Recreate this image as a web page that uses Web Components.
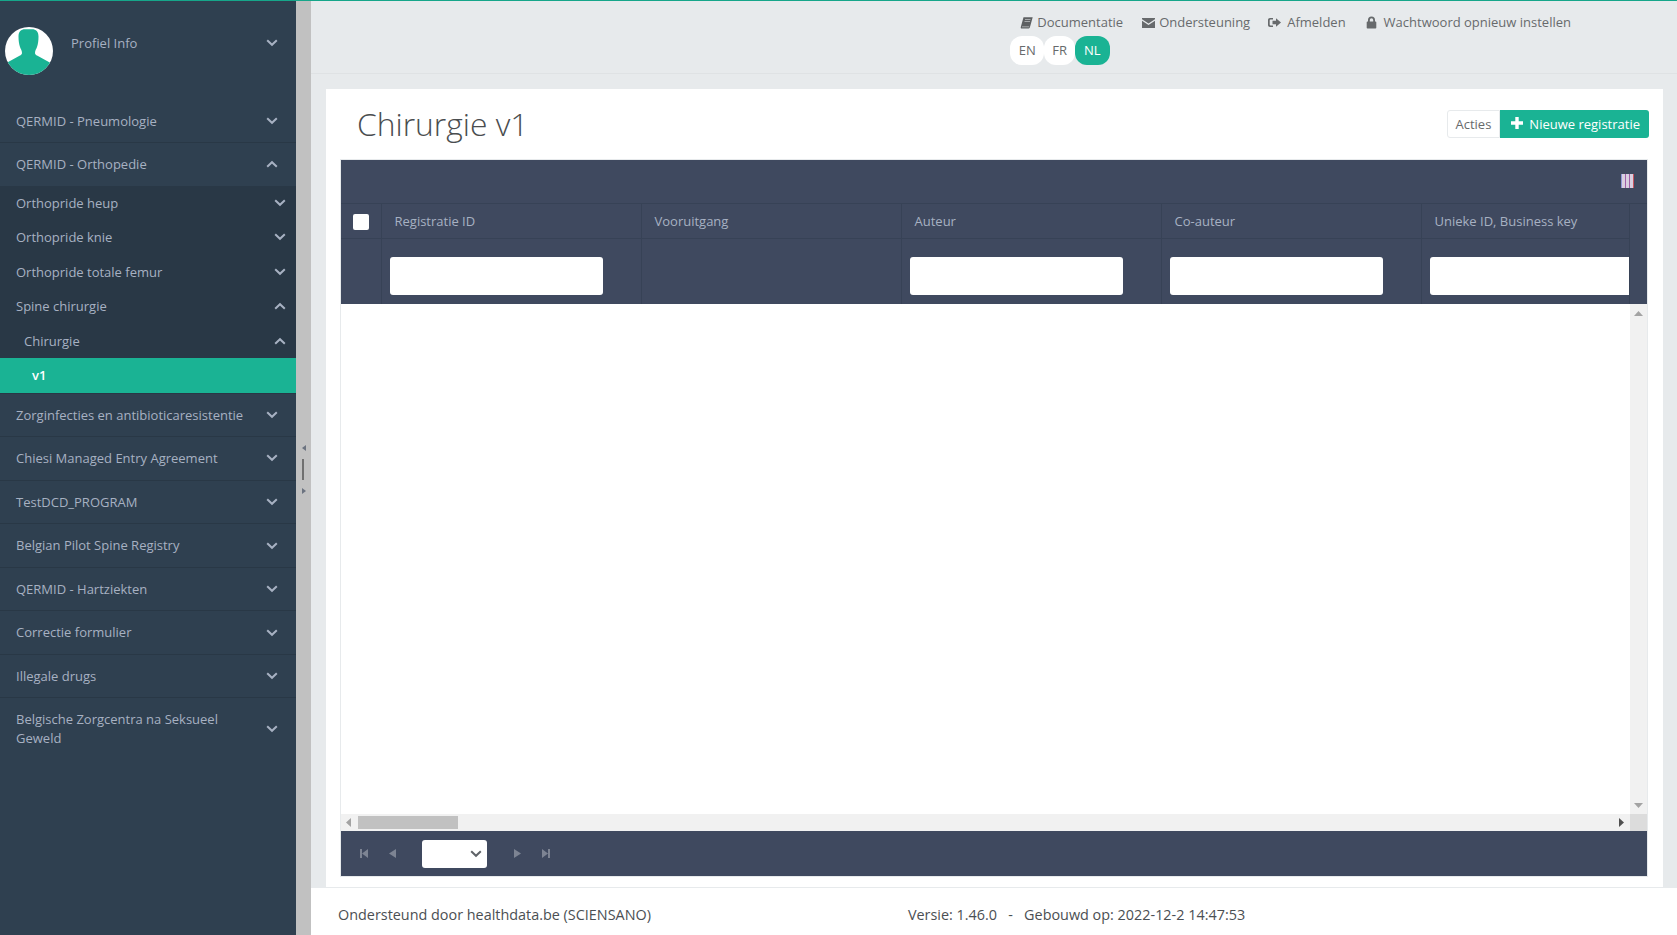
<!DOCTYPE html>
<html>
<head>
<meta charset="utf-8">
<title>Chirurgie v1</title>
<style>
    html, body { margin: 0; height: 100%; }
    body { font-family: "Open Sans", "Liberation Sans", sans-serif; font-size: 13px; line-height: 1.42857; color: #676a6c; overflow: hidden; }
</style>
</head>
<body>
<hd-app>
    <hd-sidebar slot="sidebar">
        <hd-nav-item label="QERMID - Pneumologie"></hd-nav-item>
        <hd-nav-item label="QERMID - Orthopedie" open>
            <hd-sub-item label="Orthopride heup"></hd-sub-item>
            <hd-sub-item label="Orthopride knie"></hd-sub-item>
            <hd-sub-item label="Orthopride totale femur"></hd-sub-item>
            <hd-sub-item label="Spine chirurgie" open></hd-sub-item>
            <hd-sub-item label="Chirurgie" level="1" open></hd-sub-item>
            <hd-sub-item label="v1" level="2" active></hd-sub-item>
        </hd-nav-item>
        <hd-nav-item label="Zorginfecties en antibioticaresistentie"></hd-nav-item>
        <hd-nav-item label="Chiesi Managed Entry Agreement"></hd-nav-item>
        <hd-nav-item label="TestDCD_PROGRAM"></hd-nav-item>
        <hd-nav-item label="Belgian Pilot Spine Registry"></hd-nav-item>
        <hd-nav-item label="QERMID - Hartziekten"></hd-nav-item>
        <hd-nav-item label="Correctie formulier"></hd-nav-item>
        <hd-nav-item label="Illegale drugs"></hd-nav-item>
        <hd-nav-item label="Belgische Zorgcentra na Seksueel Geweld"></hd-nav-item>
    </hd-sidebar>
    <hd-topbar slot="topbar"></hd-topbar>
    <hd-panel slot="content" heading="Chirurgie v1">
        <hd-grid></hd-grid>
    </hd-panel>
    <hd-footer slot="footer"></hd-footer>
</hd-app>

<script>
// small helper, every element just writes its own shadow root
function shadow(el, html) {
    el.attachShadow({ mode: 'open' }).innerHTML = html;
}

const chevron = (open, color) => `
    <svg width="12" height="8" viewBox="0 0 12 8" fill="none" stroke="${color || '#a7b1c2'}" stroke-width="2">
        <path d="${open ? 'M1.2 6.8 6 2.2l4.8 4.6' : 'M1.2 1.2 6 5.8l4.8-4.6'}"/>
    </svg>`;

class HdApp extends HTMLElement {
    constructor() {
        super();
        shadow(this, `
            <style>
                :host { display: grid; grid-template-columns: 296px 15px 1fr; grid-template-rows: 1fr; height: 100vh; box-sizing: border-box; border-top: 1px solid #16a68a; background: #e7eaec; }
                .splitter { background: #c1c1c1; display: flex; flex-direction: column; align-items: center; justify-content: center; gap: 8px; padding-top: 2px; }
                .splitter i { display: block; width: 2px; height: 21px; background: #707070; margin: 0 0 0 -1px; }
                main { display: flex; flex-direction: column; min-width: 0; }
            </style>
            <slot name="sidebar"></slot>
            <div class="splitter">
                <svg width="6" height="6" viewBox="0 0 6 6"><path d="M5 0v6L1 3z" fill="#6b7380"/></svg>
                <i></i>
                <svg width="6" height="6" viewBox="0 0 6 6"><path d="M1 0v6l4-3z" fill="#6b7380"/></svg>
            </div>
            <main>
                <slot name="topbar"></slot>
                <slot name="content"></slot>
                <slot name="footer"></slot>
            </main>`);
    }
}

class HdSidebar extends HTMLElement {
    constructor() {
        super();
        shadow(this, `
            <style>
                :host { display: block; background: #2f4050; color: #a7b1c2; overflow: hidden; }
                .profile { height: 98.6px; box-sizing: border-box; padding: 26px 16px 0 5px; display: flex; align-items: flex-start; }
                .avatar { width: 48px; height: 48px; flex: none; }
                .name { flex: 1; margin: 0 0 0 18px; height: 32px; line-height: 32px; }
                .caret { margin-top: 12px; padding-right: 2px; display: flex; }
            </style>
            <div class="profile">
                <svg class="avatar" viewBox="0 0 48 48">
                    <defs><clipPath id="c"><circle cx="24" cy="24" r="24"/></clipPath></defs>
                    <g clip-path="url(#c)">
                        <rect width="48" height="48" fill="#fff"/>
                        <path d="M13.500 9.500C13.500 4.500 16 2.300 20 2.300h7c4 0 6.500 2.200 6.500 7.200 0 4-.5 7.500-1.500 10.500-.7 2-2 3.500-2 6 0 1.200.8 2 2.500 2.700L47 36.700V48H0V36.700l14.500-8c1.700-.7 2.500-1.500 2.500-2.700 0-2.500-1.300-4-2-6-1-3-1.500-6.500-1.500-10.500z" fill="#1ab394"/>
                    </g>
                </svg>
                <span class="name">Profiel Info</span>
                <span class="caret">${chevron(false)}</span>
            </div>
            <slot></slot>`);
    }
}

class HdNavItem extends HTMLElement {
    constructor() {
        super();
        const open = this.hasAttribute('open');
        shadow(this, `
            <style>
                :host { display: block; border-bottom: 1px solid #293846; }
                :host(:last-child) { border-bottom: 0; }
                a { display: flex; align-items: center; padding: 12px 18px 12px 16px; }
                span { flex: 1; padding-right: 14px; }
                a svg { flex: none; }
                .sub { background: #293846; }
            </style>
            <a><span>${this.getAttribute('label')}</span>${chevron(open)}</a>
            ${open ? '<div class="sub"><slot></slot></div>' : ''}`);
    }
}

class HdSubItem extends HTMLElement {
    constructor() {
        super();
        const level = +(this.getAttribute('level') || 0);
        const active = this.hasAttribute('active');
        shadow(this, `
            <style>
                :host { display: flex; height: 34.47px; box-sizing: border-box; padding: 8px 10px 8px ${16 + level * 8}px; align-items: center; justify-content: space-between; }
                :host([active]) { background: #1ab394; color: #fff; font-weight: 600; }
            </style>
            <span>${this.getAttribute('label')}</span>
            ${active ? '' : chevron(this.hasAttribute('open'))}`);
    }
}

const topIcons = {
    book: '<path d="M1.800 12 4.500 2.200h9.200L11 12c-.3 1-1 1.600-2 1.600H3c-1 0-1.500-.7-1.200-1.600z" fill="#5d6062"/><path d="M3 11.800h7.200M6 4.500h5.500M5.500 6.500h5.500" stroke="#b9bcbe" stroke-width=".8" fill="none"/>',
    mail: '<path d="M1 3h13v1.200L7.500 8.400 1 4.200zM1 5.800l6.500 4.100L14 5.800V13H1z" fill="#676a6c"/>',
    out: '<path d="M6 3H3C1.800 3 1 3.800 1 5v5c0 1.200.8 2 2 2h3v-1.600H3.500c-.5 0-.8-.3-.8-.8V5.400c0-.5.3-.8.8-.8H6zM9 3.200l5 4.300-5 4.300V9.300H5.500V5.700H9z" fill="#676a6c"/>',
    lock: '<path d="M4 6.500V5a3.500 3.500 0 0 1 7 0v1.500h.5c.5 0 .8.300.8.8v5.400c0 .5-.3.800-.8.800h-8c-.5 0-.8-.3-.8-.8V7.300c0-.5.3-.8.8-.8zm1.800 0h3.400V5a1.700 1.700 0 0 0-3.400 0z" fill="#676a6c"/>'
};

class HdTopbar extends HTMLElement {
    constructor() {
        super();
        const link = (icon, text, gap, extra) => `<a style="--gap:${gap}px;${extra || ''}"><svg width="15" height="15" viewBox="0 0 15 15">${topIcons[icon]}</svg>${text}</a>`;
        shadow(this, `
            <style>
                :host { display: flex; justify-content: flex-end; height: 73px; box-sizing: border-box; border-bottom: 1px solid #dfe2e4; padding: 11px 106px 0 0; flex: none; }
                .links { display: flex; gap: 18px; margin-left: 9px; height: 20px; align-items: center; }
                a { display: flex; align-items: center; gap: var(--gap); }
                .langs { display: flex; margin-top: 4px; }
                .langs span { height: 29px; line-height: 29px; padding: 0 9px; border-radius: 12px; background: #fff; }
                .langs span:nth-child(1) { padding: 0 8.500px; }
                .langs span:nth-child(2) { padding: 0 8px; }
                .langs .on { background: #1ab394; color: #fff; }
            </style>
            <div>
                <div class="links">
                    ${link('book', 'Documentatie', 3)}
                    ${link('mail', 'Ondersteuning', 3)}
                    ${link('out', 'Afmelden', 5, 'margin:1px 0 0 -1px')}
                    ${link('lock', 'Wachtwoord opnieuw instellen', 5, 'margin-top:1px')}
                </div>
                <div class="langs"><span>EN</span><span>FR</span><span class="on">NL</span></div>
            </div>`);
    }
}

class HdPanel extends HTMLElement {
    constructor() {
        super();
        shadow(this, `
            <style>
                :host { display: flex; flex: 1; min-height: 0; padding: 15px 14px 0 15px; }
                .card { flex: 1; min-width: 0; background: #fff; display: flex; flex-direction: column; padding: 0 15px 10px 14px; }
                .head { height: 70px; flex: none; display: flex; align-items: center; justify-content: space-between; margin-right: -1px; }
                h1 { margin: 0 0 0 17px; font-size: 31.800px; font-weight: 300; color: #4a4d4f; line-height: 40px; }
                .btns { display: flex; height: 28px; }
                button { font: inherit; height: 28px; padding: 0 8px; border-radius: 3px 0 0 3px; border: 1px solid #e7eaec; background: #fff; color: #676a6c; }
                button.new { border: 0; border-radius: 0 3px 3px 0; background: #1ab394; color: #fff; padding: 0 9px 0 11px; display: flex; align-items: center; gap: 6px; }
            </style>
            <div class="card">
                <div class="head">
                    <h1>${this.getAttribute('heading')}</h1>
                    <div class="btns">
                        <button>Acties</button>
                        <button class="new"><svg width="12" height="12" viewBox="0 0 12 12" style="margin-top:-3px"><path d="M4.300 0h3.400v4.300H12v3.400H7.700V12H4.300V7.700H0V4.300h4.300z" fill="#fff"/></svg>Nieuwe registratie</button>
                    </div>
                </div>
                <slot></slot>
            </div>`);
    }
}

class HdGrid extends HTMLElement {
    constructor() {
        super();
        const columns = [
            { title: 'Registratie ID', filter: true },
            { title: 'Vooruitgang', filter: false },
            { title: 'Auteur', filter: true },
            { title: 'Co-auteur', filter: true },
            { title: 'Unieke ID, Business key', filter: true }
        ];
        const heads = columns.map(c => `<div class="cell title">${c.title}</div>`).join('');
        const filters = columns.map(c => `<div class="cell filter">${c.filter ? '<input>' : ''}</div>`).join('');
        shadow(this, `
            <style>
                :host { display: flex; flex-direction: column; flex: 1; min-height: 0; box-sizing: border-box; border: 1px solid #e7eaec; }
                .bar { background: #3f495f; height: 44px; box-sizing: border-box; flex: none; display: flex; justify-content: flex-end; align-items: center; padding: 0 13px 1px 0; border-bottom: 1px solid #374256; }
                .head { display: grid; flex: none; background: #3f495f; overflow: hidden; grid-template-columns: 41px repeat(5, 260px); grid-template-rows: 35px 65px; height: 100px; position: relative; }
                .head::after { content: ""; position: absolute; top: 0; right: 0; bottom: 0; width: 17px; background: #3f495f; border-left: 1px solid #374256; }
                .cell { border-right: 1px solid #374256; border-bottom: 1px solid #374256; box-sizing: border-box; color: #a7b1c2; }
                .filter { border-bottom: 0; padding: 18px 8px 0 8px; }
                .title { padding: 0 12.500px; line-height: 34px; white-space: nowrap; }
                .check { display: flex; align-items: center; justify-content: center; }
                .check i { display: block; width: 16px; height: 16px; background: #fff; border-radius: 2px; margin-top: 1px; }
                input { display: block; box-sizing: border-box; width: 213px; height: 38px; margin: 0; border: 0; border-radius: 3px; background: #fff; }
                .body { flex: 1; min-height: 0; display: grid; grid-template-columns: 1fr 17px; grid-template-rows: 1fr 17px; }
                .sbv { background: #f1f1f1; display: flex; flex-direction: column; justify-content: space-between; align-items: center; padding: 7px 0 6px; }
                .sbh { background: #f1f1f1; display: flex; align-items: center; padding-left: 5px; position: relative; }
                .thumb { position: absolute; left: 17px; top: 2px; width: 100px; height: 13px; background: #c1c1c1; }
                .sbh svg:last-child { position: absolute; right: 6px; top: 4px; }
                .corner { background: #dcdcdc; }
                .pager { background: #3f495f; height: 45px; flex: none; display: flex; align-items: center; padding-left: 19px; }
                .pager svg { flex: none; }
                .sel { width: 65px; height: 28px; background: #fff; border-radius: 3px; margin: 0 27px 0 26px; display: flex; align-items: center; justify-content: flex-end; padding-right: 5px; box-sizing: border-box; }
            </style>
            <div class="bar">
                <svg width="13" height="14" viewBox="0 0 13 14" shape-rendering="crispEdges">
                    <path d="M0 0h1v14H0z" fill="#8f97d6"/>
                    <path d="M1 0h3v14H1zM5 0h3v14H5zM9 0h3v14H9z" fill="#d9cfe0"/>
                    <path d="M4 0h1v14H4zM8 0h1v14H8z" fill="#a05fa8"/>
                    <path d="M12 0h1v14h-1z" fill="#c9545f"/>
                </svg>
            </div>
            <div class="head">
                <div class="cell check"><i></i></div>${heads}
                <div class="cell filter"></div>${filters}
            </div>
            <div class="body">
                <div></div>
                <div class="sbv">
                    <svg width="9" height="5" viewBox="0 0 9 5"><path d="M0 5 4.500 0 9 5z" fill="#a3a3a3"/></svg>
                    <svg width="9" height="5" viewBox="0 0 9 5"><path d="M0 0h9L4.500 5z" fill="#a3a3a3"/></svg>
                </div>
                <div class="sbh">
                    <svg width="5" height="9" viewBox="0 0 5 9"><path d="M5 0v9L0 4.500z" fill="#a3a3a3"/></svg>
                    <div class="thumb"></div>
                    <svg width="5" height="9" viewBox="0 0 5 9"><path d="M0 0v9l5-4.500z" fill="#505050"/></svg>
                </div>
                <div class="corner"></div>
            </div>
            <div class="pager">
                <svg width="8" height="9" viewBox="0 0 8 9"><path d="M0 0h2v9H0zM8 0v9L2 4.500z" fill="#7d8493"/></svg>
                <svg width="7" height="9" viewBox="0 0 7 9" style="margin-left:21px"><path d="M7 0v9L0 4.500z" fill="#7d8493"/></svg>
                <div class="sel">${chevron(false, '#5f6368')}</div>
                <svg width="7" height="9" viewBox="0 0 7 9"><path d="M0 0v9l7-4.500z" fill="#7d8493"/></svg>
                <svg width="8" height="9" viewBox="0 0 8 9" style="margin-left:21px"><path d="M0 0v9l6-4.500zM6 0h2v9H6z" fill="#7d8493"/></svg>
            </div>`);
    }
}

class HdFooter extends HTMLElement {
    constructor() {
        super();
        shadow(this, `
            <style>
                :host { display: flex; height: 48px; flex: none; box-sizing: border-box; background: #fff; border-top: 1px solid #e7eaec; padding: 17px 0 0 27px; color: #4b4f53; font-size: 14.4px; line-height: 20px; }
                .version { margin-left: 257px; }
            </style>
            <span>Ondersteund door healthdata.be (SCIENSANO)</span>
            <span class="version">Versie: 1.46.0 &nbsp;&nbsp;-&nbsp;&nbsp; Gebouwd op: 2022-12-2 14:47:53</span>`);
    }
}

customElements.define('hd-app', HdApp);
customElements.define('hd-sidebar', HdSidebar);
customElements.define('hd-nav-item', HdNavItem);
customElements.define('hd-sub-item', HdSubItem);
customElements.define('hd-topbar', HdTopbar);
customElements.define('hd-panel', HdPanel);
customElements.define('hd-grid', HdGrid);
customElements.define('hd-footer', HdFooter);
</script>
</body>
</html>
